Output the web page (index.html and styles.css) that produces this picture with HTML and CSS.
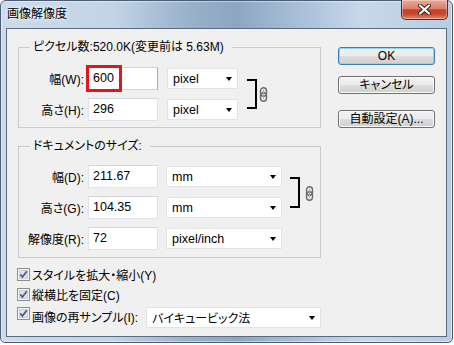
FILE: index.html
```html
<!DOCTYPE html>
<html lang="ja">
<head>
  <meta charset="UTF-8" />
  <title>画像解像度</title>
  <link rel="stylesheet" href="styles.css">
</head>
<body>
  <div class="window">
    <div class="titlebar">
      <span class="title">画像解像度</span>
      <span class="close">
        <svg width="13" height="11" viewBox="0 0 13 11">
          <path d="M2 1.5 L11 9.5 M11 1.5 L2 9.5" stroke="#3a1d18" stroke-width="4" stroke-linecap="round" />
          <path d="M2 1.5 L11 9.5 M11 1.5 L2 9.5" stroke="#fff" stroke-width="2.2" stroke-linecap="round" />
        </svg>
      </span>
    </div>

    <div class="client">
      <div class="main">
        <fieldset class="group">
          <legend>ピクセル数:520.0K(変更前は 5.63M)</legend>
          <div class="rows rows-pixel">
            <label class="lbl">幅(W):</label>
            <div class="field">
              <span class="input focus">600</span>
              <span class="mark"></span>
            </div>
            <div class="select sel-small"><span>pixel</span><i class="arrow"></i></div>
            <div class="link">
              <span class="bracket"></span>
              <svg class="chain" width="9" height="15" viewBox="0 0 9 15">
                <rect x="1.5" y="0.8" width="6" height="8.5" rx="3" fill="#e8e8e8" stroke="#6b6b6b" stroke-width="1.4" />
                <rect x="1.5" y="5.7" width="6" height="8.5" rx="3" fill="none" stroke="#6b6b6b" stroke-width="1.4" />
                <path d="M4.5 3 V12" stroke="#a8a8a8" stroke-width="1" />
              </svg>
            </div>
            <label class="lbl">高さ(H):</label>
            <div class="field"><span class="input">296</span></div>
            <div class="select sel-small"><span>pixel</span><i class="arrow"></i></div>
          </div>
        </fieldset>

        <fieldset class="group group-doc">
          <legend>ドキュメントのサイズ:</legend>
          <div class="rows rows-doc">
            <label class="lbl">幅(D):</label>
            <div class="field"><span class="input">211.67</span></div>
            <div class="select sel-wide"><span>mm</span><i class="arrow"></i></div>
            <div class="link link-doc">
              <span class="bracket"></span>
              <svg class="chain" width="9" height="15" viewBox="0 0 9 15">
                <rect x="1.5" y="0.8" width="6" height="8.5" rx="3" fill="#e8e8e8" stroke="#6b6b6b" stroke-width="1.4" />
                <rect x="1.5" y="5.7" width="6" height="8.5" rx="3" fill="none" stroke="#6b6b6b" stroke-width="1.4" />
                <path d="M4.5 3 V12" stroke="#a8a8a8" stroke-width="1" />
              </svg>
            </div>
            <label class="lbl">高さ(G):</label>
            <div class="field"><span class="input">104.35</span></div>
            <div class="select sel-wide"><span>mm</span><i class="arrow"></i></div>
            <label class="lbl">解像度(R):</label>
            <div class="field"><span class="input">72</span></div>
            <div class="select sel-wide"><span>pixel/inch</span><i class="arrow"></i></div>
          </div>
        </fieldset>

        <div class="checks">
          <label class="check">
            <svg class="box" width="13" height="13" viewBox="0 0 13 13">
              <rect x="0.5" y="0.5" width="12" height="12" fill="#f4f4f4" stroke="#8e8f8f" />
              <rect x="2.5" y="2.5" width="8" height="8" fill="#e2e2e2" stroke="#d0d0d0" />
              <path d="M3.3 6.4 L5.4 9 L9.8 3.2" fill="none" stroke="#4a5d9e" stroke-width="1.8" />
            </svg>
            スタイルを拡大・縮小(Y)
          </label>
          <label class="check">
            <svg class="box" width="13" height="13" viewBox="0 0 13 13">
              <rect x="0.5" y="0.5" width="12" height="12" fill="#f4f4f4" stroke="#8e8f8f" />
              <rect x="2.5" y="2.5" width="8" height="8" fill="#e2e2e2" stroke="#d0d0d0" />
              <path d="M3.3 6.4 L5.4 9 L9.8 3.2" fill="none" stroke="#4a5d9e" stroke-width="1.8" />
            </svg>
            縦横比を固定(C)
          </label>
          <div class="check check-resample">
            <svg class="box" width="13" height="13" viewBox="0 0 13 13">
              <rect x="0.5" y="0.5" width="12" height="12" fill="#f4f4f4" stroke="#8e8f8f" />
              <rect x="2.5" y="2.5" width="8" height="8" fill="#e2e2e2" stroke="#d0d0d0" />
              <path d="M3.3 6.4 L5.4 9 L9.8 3.2" fill="none" stroke="#4a5d9e" stroke-width="1.8" />
            </svg>
            <span class="check-text">画像の再サンプル(I):</span>
            <div class="select sel-method"><span>バイキュービック法</span><i class="arrow"></i></div>
          </div>
        </div>
      </div>

      <div class="buttons">
        <button class="btn btn-default">OK</button>
        <button class="btn">キャンセル</button>
        <button class="btn btn-auto">自動設定(A)...</button>
      </div>
    </div>
  </div>
</body>
</html>
```

FILE: styles.css
```css
* { box-sizing: border-box; }

body {
  margin: 0;
  width: 454px;
  height: 345px;
  background: #fff;
  font-family: "Liberation Sans", "Noto Sans CJK JP", sans-serif;
  font-size: 12px;
  font-feature-settings: "palt";
  color: #000;
}

.window {
  width: 453px;
  height: 343px;
  border: 1px solid #4b5c70;
  border-radius: 6px 6px 5px 5px;
  background: linear-gradient(90deg, #cbdbeb 0%, #c2d4e7 25%, #9cb4cd 40%, #8ca6c2 52%, #a6bdd6 65%, #c7d8ea 80%, #b8cce2 100%);
  box-shadow: inset 0 0 0 1px rgba(255, 255, 255, 0.45);
  display: flex;
  flex-direction: column;
}

.titlebar {
  height: 27px;
  display: flex;
  align-items: flex-start;
}
.title {
  padding: 5px 0 0 6px;
  line-height: 16px;
  font-feature-settings: normal;
  text-shadow: 0 0 6px #fff, 0 0 3px rgba(255, 255, 255, 0.8);
}
.close {
  margin: -1px 4px 0 auto;
  width: 47px;
  height: 20px;
  display: flex;
  align-items: center;
  justify-content: center;
  border: 1px solid #5c2a22;
  border-top: none;
  border-radius: 0 0 5px 5px;
  background: linear-gradient(#eaa99a 0%, #dc8069 45%, #c1412a 52%, #c7472d 75%, #e08a6c 100%);
  box-shadow: inset 0 0 0 1px rgba(255, 255, 255, 0.35);
}

.client {
  flex: 1;
  margin: 0 5px 5px;
  background: #f0f0f0;
  border: 1px solid #5a6b80;
  display: flex;
  align-items: flex-start;
}

.main {
  width: 303px;
  margin: 10px 0 0 11px;
}

.group {
  margin: 0;
  padding: 12px 0 6px;
  border: 1px solid #cbcbcb;
  min-width: 0;
}
.group-doc {
  margin-top: 10px;
  padding: 11px 0 7px;
}
legend {
  margin-left: 11px;
  padding: 0 8px 0 3px;
  line-height: 16px;
}

.rows {
  display: grid;
  row-gap: 8px;
  align-items: center;
}
.rows-pixel { grid-template-columns: 69px 79px 80px auto; }
.rows-doc { grid-template-columns: 69px 78px 124px auto; }

.lbl {
  text-align: right;
  padding-right: 4px;
  white-space: nowrap;
}

.field { position: relative; }
.input {
  display: block;
  width: 70px;
  height: 23px;
  background: #fff;
  border: 1px solid #e2e3ea;
  border-top-color: #d4d6de;
  padding-left: 4px;
  line-height: 21px;
  font-size: 12.5px;
}
.input.focus { border-color: #c5daed; border-right-color: #7eb4ea; }
.mark {
  position: absolute;
  left: -2px;
  top: -2px;
  width: 36px;
  height: 27px;
  border: 3px solid #e3151a;
}

.select {
  display: flex;
  align-items: center;
  height: 21px;
  background: #fff;
  border: 1px solid #e3e3e3;
  padding: 1px 5px 0 5px;
  font-size: 12.5px;
}
.sel-small { width: 71px; }
.sel-wide { width: 116px; }
.sel-method { width: 175px; margin-left: auto; font-size: 12px; }
.arrow {
  margin-left: auto;
  border-left: 3.5px solid transparent;
  border-right: 3.5px solid transparent;
  border-top: 4px solid #000;
}

.link {
  grid-column: 4;
  grid-row: 1 / span 2;
  align-self: stretch;
  display: flex;
  align-items: center;
  padding: 12px 0;
}
.link-doc { padding: 12px 0 11px; }
.bracket {
  width: 10px;
  align-self: stretch;
  border: 2px solid #000;
  border-left: none;
}
.chain { margin-left: 2px; margin-top: 1px; }
.link-doc .chain { margin-left: 5px; }

.checks {
  margin-top: 6px;
  display: flex;
  flex-direction: column;
}
.check {
  display: flex;
  align-items: center;
  height: 20px;
  white-space: nowrap;
}
.check-resample { height: 22px; margin-top: 2px; }
.box {
  margin: 0 2px 0 -1px;
  flex: none;
}
.check-resample .box { margin-bottom: 7px; }
.check-resample .check-text { margin-bottom: 2px; }

.buttons {
  width: 97px;
  margin: 18px 0 0 17px;
  display: flex;
  flex-direction: column;
}
.btn {
  height: 18px;
  padding: 0;
  font-family: inherit;
  font-size: 12px;
  font-feature-settings: "palt";
  line-height: 16px;
  color: #000;
  border: 1px solid #707070;
  border-radius: 3px;
  background: linear-gradient(#f2f2f2 0%, #ebebeb 50%, #dddddd 51%, #cfcfcf 100%);
  box-shadow: inset 0 0 0 1px #fbfbfb;
}
.btn-default {
  border-color: #3c7fb1;
  box-shadow: inset 0 0 0 1px #8fd6f5;
}
.btn + .btn { margin-top: 11px; }
.btn.btn-auto { margin-top: 16px; }
```
